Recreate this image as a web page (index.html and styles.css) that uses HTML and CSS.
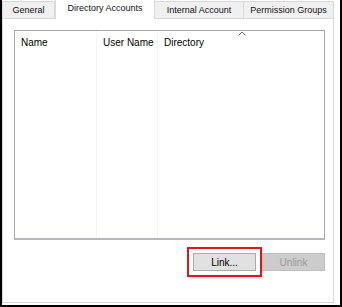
FILE: index.html
```html
<!DOCTYPE html>
<html lang="en">
<head>
  <meta charset="UTF-8">
  <title>Directory Accounts</title>
  <link rel="stylesheet" href="styles.css">
</head>
<body>
  <div class="frame">
    <div class="tabs">
      <div class="tab tab-general">General</div>
      <div class="tab tab-active">Directory Accounts</div>
      <div class="tab tab-internal">Internal Account</div>
      <div class="tab tab-perm">Permission Groups</div>
    </div>

    <div class="panel">
      <div class="list">
        <div class="col col-name">
          <div class="head">Name</div>
        </div>
        <div class="col col-user">
          <div class="head">User Name</div>
        </div>
        <div class="col col-dir">
          <div class="head">Directory</div>
          <svg class="sort" width="8" height="5" viewBox="0 0 8 5">
            <polyline points="0.5,4.5 4,1 7.5,4.5" fill="none" stroke="#6d6d6d" stroke-width="1"/>
          </svg>
        </div>
      </div>

      <div class="actions">
        <button class="btn btn-link">Link...</button>
        <button class="btn btn-off" disabled>Unlink</button>
      </div>
    </div>
  </div>
</body>
</html>
```

FILE: styles.css
```css
body {
  margin: 0;
  padding: 0;
  background: #fff;
  font-family: 'Liberation Sans', Arial, sans-serif;
  font-size: 10px;
  color: #000;
}

.frame {
  width: 342px;
  height: 307px;
  box-sizing: border-box;
  border: 2px solid #000;
  border-top: none;
  padding-right: 6px;
  padding-bottom: 2px;
  display: flex;
  flex-direction: column;
}

/* Fila de pestañas */
.tabs {
  display: flex;
  height: 18px;
  align-items: flex-end;
  position: relative;
  z-index: 1;
}

.tab {
  box-sizing: border-box;
  height: 17px;
  background: #f0f0f0;
  border: 1px solid #d9d9d9;
  border-bottom: none;
  text-align: center;
  line-height: 17px;
  font-size: 9px;
  color: #111;
}

.tab-general { width: 53px; }
.tab-internal { width: 89px; border-left: none; }
.tab-perm { width: 90px; border-left: none; }

.tab-active {
  width: 100px;
  height: 20px;
  margin-bottom: -1px;
  background: #fff;
  line-height: 17px;
}

/* Panel principal */
.panel {
  flex: 1;
  border: 1px solid #d9d9d9;
  padding: 11px 8px 0 11px;
  display: flex;
  flex-direction: column;
}

.list {
  height: 210px;
  box-sizing: border-box;
  border: 1px solid #a7a7ad;
  border-bottom: 2px solid #b6b6bc;
  display: flex;
}

.col {
  position: relative;
  box-sizing: border-box;
}

.col-name { width: 82px; border-right: 1px solid #f1f4f8; }
.col-user { width: 61px; border-right: 1px solid #f1f4f8; }
.col-dir { flex: 1; }

.head {
  height: 22px;
  line-height: 22px;
  padding-top: 1px;
  padding-left: 6px;
}

.sort {
  position: absolute;
  top: 0;
  left: 80px;
}

/* Botones */
.actions {
  display: flex;
  justify-content: flex-end;
  gap: 6px;
  margin-top: 13px;
}

.btn {
  width: 63px;
  height: 18px;
  box-sizing: border-box;
  font-family: inherit;
  font-size: 10px;
  padding: 0;
  border: 1px solid #adadad;
  background: #e1e1e1;
  color: #000;
}

.btn-link {
  outline: 2px solid #e3141c;
  outline-offset: 4px;
  box-shadow: 0 0 0 6px #fff, 1px 2px 0 6px rgba(0, 0, 0, 0.08);
}

.btn-off {
  background: #cccccc;
  border-color: #bfbfbf;
  color: #9a9a9a;
}
```
